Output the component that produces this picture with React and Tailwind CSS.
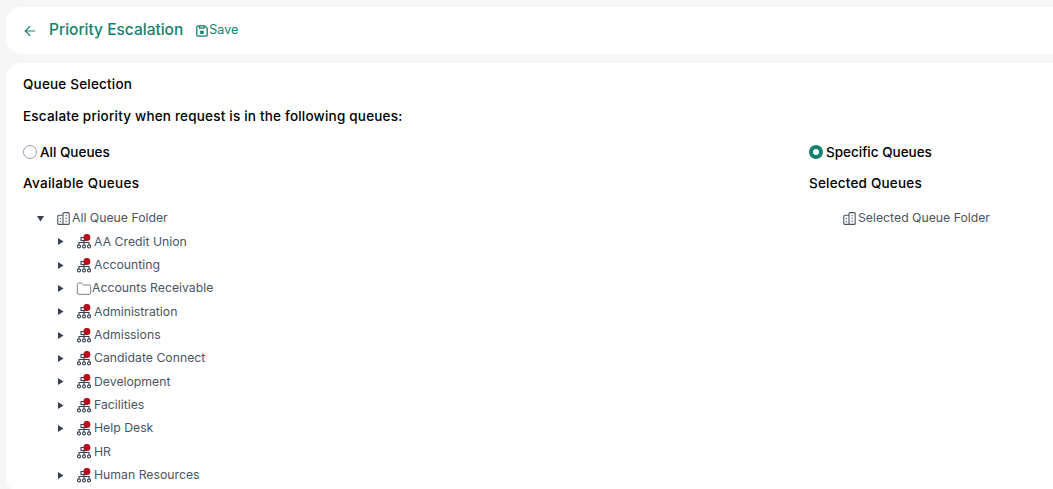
import { ArrowLeft, Folder } from "lucide-react";

const fontStack = { fontFamily: "Inter, 'Noto Sans', sans-serif" };

const queues = [
  { name: "AA Credit Union", icon: "org", arrow: true },
  { name: "Accounting", icon: "org", arrow: true },
  { name: "Accounts Receivable", icon: "folder", arrow: true },
  { name: "Administration", icon: "org", arrow: true },
  { name: "Admissions", icon: "org", arrow: true },
  { name: "Candidate Connect", icon: "org", arrow: true },
  { name: "Development", icon: "org", arrow: true },
  { name: "Facilities", icon: "org", arrow: true },
  { name: "Help Desk", icon: "org", arrow: true },
  { name: "HR", icon: "org", arrow: false },
  { name: "Human Resources", icon: "org", arrow: true },
];

const SaveIcon = () => (
  <svg width="12" height="12" viewBox="0 0 12 12" fill="none" stroke="currentColor" strokeWidth="1.3">
    <path d="M2 .8h6.8l2.4 2.4V10a1.2 1.2 0 0 1-1.2 1.2H2A1.2 1.2 0 0 1 .8 10V2A1.2 1.2 0 0 1 2 .8z" />
    <path d="M3.5 1v2.2h4.5V1" />
    <rect x="4.6" y="6" width="2.8" height="2.8" fill="currentColor" strokeWidth="0.6" />
  </svg>
);

const BuildingsIcon = () => (
  <svg width="13" height="13" viewBox="0 0 13 13" fill="none" stroke="#4b5563" strokeWidth="1.1">
    <rect x="6" y="0.6" width="6.2" height="11.8" rx="1" />
    <path d="M6 3.2H2a1.2 1.2 0 0 0-1.2 1.2v6.8A1.2 1.2 0 0 0 2 12.4h4" />
    <path d="M3.4 6v1.2M3.4 9v1.2M9.1 3v1.3M9.1 5.8v1.3M9.1 8.6v1.3" />
  </svg>
);

const OrgIcon = () => (
  <svg width="14" height="15" viewBox="0 0 14 15" fill="none">
    <g stroke="#374151" strokeWidth="1.1">
      <path d="M7 6v4.5M2 10.5V8.5h10v2" />
      <rect x="4" y="3.5" width="5" height="3" />
      <circle cx="2" cy="12.4" r="1.5" />
      <circle cx="7" cy="12.4" r="1.5" />
      <circle cx="12" cy="12.4" r="1.5" />
    </g>
    <circle cx="9.9" cy="3.4" r="3.5" fill="#b80f1f" />
  </svg>
);

const Caret = ({ open }) => (
  <svg width="7" height="7" viewBox="0 0 7 7" fill="#374151">
    {open ? <path d="M0 1h7L3.5 6.5z" /> : <path d="M1 0l5.5 3.5L1 7z" />}
  </svg>
);

const QueueRow = ({ queue }) => (
  <li className="flex h-[23.33px] items-center pl-[34px]">
    <span className="flex w-[20px] shrink-0">{queue.arrow && <Caret />}</span>
    {queue.icon === "org" ? (
      <span className="mr-[3px] flex"><OrgIcon /></span>
    ) : (
      <Folder className="-ml-[1px] mr-[0px] h-[16px] w-[16px] text-gray-600" strokeWidth={1.1} />
    )}
    <span className="text-[12.25px] text-[#4b5563]">{queue.name}</span>
  </li>
);

export default function App() {
  return (
    <div className="h-[489px] overflow-hidden bg-[#f6f6f6] pt-[7px] pl-[6px]" style={fontStack}>
      <header className="flex h-[47px] items-center rounded-l-2xl bg-white pl-[16px]">
        <ArrowLeft className="h-[16px] w-[16px] text-[#14806f]" strokeWidth={1.75} />
        <h1 className="ml-[11px] -translate-y-[1px] text-[15.5px] font-medium text-[#14806f]">Priority Escalation</h1>
        <div className="ml-[13px] flex items-center gap-[1px] text-[12.5px] text-[#14806f]">
          <SaveIcon />
          <span>Save</span>
        </div>
      </header>

      <main className="mt-[9px] h-[430px] rounded-l-2xl bg-white pl-[17px] pt-[12px] text-black">
        <h2 className="text-[13.5px] font-medium leading-[18px] tracking-[0.2px]">Queue Selection</h2>
        <p className="mt-[14px] text-[13.5px] font-medium leading-[18px] tracking-[0.2px]">
          Escalate priority when request is in the following queues:
        </p>

        <div className="mt-[18px] grid grid-cols-[786px_1fr]">
          <label className="flex items-center gap-[3px] text-[13.5px] font-medium leading-[18px]">
            <span className="h-[14px] w-[14px] rounded-full border border-gray-400 bg-white" />
            All Queues
          </label>
          <label className="flex items-center gap-[3px] text-[13.5px] font-medium leading-[18px]">
            <span className="h-[14px] w-[14px] rounded-full border-[4px] border-[#14806f] bg-white" />
            Specific Queues
          </label>

          <h3 className="mt-[13px] text-[13.5px] font-medium leading-[18px] tracking-[0.3px]">Available Queues</h3>
          <h3 className="mt-[13px] text-[13.5px] font-medium leading-[18px] tracking-[0.2px]">Selected Queues</h3>

          <div className="mt-[15px]">
            <div className="flex h-[23.33px] items-center pl-[14px]">
              <span className="flex w-[20px] shrink-0"><Caret open /></span>
              <span className="mr-[2px] flex"><BuildingsIcon /></span>
              <span className="text-[12.25px] text-[#4b5563]">All Queue Folder</span>
            </div>
            <ul>
              {queues.map((queue) => (
                <QueueRow key={queue.name} queue={queue} />
              ))}
            </ul>
          </div>
          <div className="mt-[15px]">
            <div className="flex h-[23.33px] items-center pl-[34px]">
              <span className="mr-[2px] flex"><BuildingsIcon /></span>
              <span className="text-[12.25px] text-[#4b5563]">Selected Queue Folder</span>
            </div>
          </div>
        </div>
      </main>
    </div>
  );
}
